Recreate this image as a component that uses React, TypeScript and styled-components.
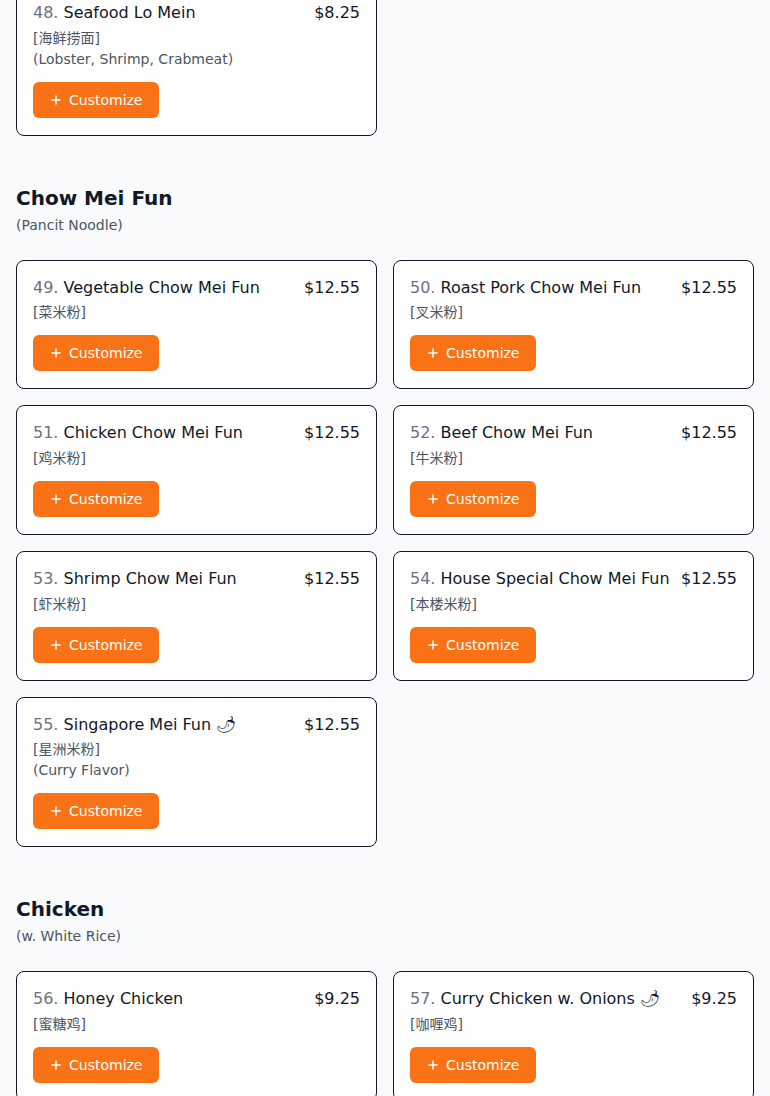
import React from 'react';
import styled, { createGlobalStyle } from 'styled-components';

const GlobalStyle = createGlobalStyle`
  * { box-sizing: border-box; }
  body {
    margin: 0;
    background: #f9fafb;
    font-family: "DejaVu Sans", "Noto Sans CJK SC", sans-serif;
    color: #111827;
  }
`;

interface Dish {
  no: number;
  name: string;
  zh: string;
  price: string;
  note?: string;
  spicy?: boolean;
}

interface Section {
  title: string;
  sub?: string;
  items: Dish[];
}

const tail: Dish[] = [
  { no: 48, name: 'Seafood Lo Mein', zh: '海鲜捞面', price: '$8.25', note: '(Lobster, Shrimp, Crabmeat)' },
];

const sections: Section[] = [
  {
    title: 'Chow Mei Fun',
    sub: '(Pancit Noodle)',
    items: [
      { no: 49, name: 'Vegetable Chow Mei Fun', zh: '菜米粉', price: '$12.55' },
      { no: 50, name: 'Roast Pork Chow Mei Fun', zh: '叉米粉', price: '$12.55' },
      { no: 51, name: 'Chicken Chow Mei Fun', zh: '鸡米粉', price: '$12.55' },
      { no: 52, name: 'Beef Chow Mei Fun', zh: '牛米粉', price: '$12.55' },
      { no: 53, name: 'Shrimp Chow Mei Fun', zh: '虾米粉', price: '$12.55' },
      { no: 54, name: 'House Special Chow Mei Fun', zh: '本楼米粉', price: '$12.55' },
      { no: 55, name: 'Singapore Mei Fun', zh: '星洲米粉', price: '$12.55', note: '(Curry Flavor)', spicy: true },
    ],
  },
  {
    title: 'Chicken',
    sub: '(w. White Rice)',
    items: [
      { no: 56, name: 'Honey Chicken', zh: '蜜糖鸡', price: '$9.25' },
      { no: 57, name: 'Curry Chicken w. Onions', zh: '咖喱鸡', price: '$9.25', spicy: true },
      { no: 58, name: 'Chicken w. Broccoli', zh: '芥兰鸡', price: '$9.25' },
      { no: 59, name: 'Sesame Chicken', zh: '芝麻鸡', price: '$9.25' },
    ],
  },
];

const Page = styled.main`
  margin-top: -15px;
  padding: 0 16px 32px;
  display: flex;
  flex-direction: column;
  gap: 48px;
`;

const SectionBlock = styled.section`
  display: flex;
  flex-direction: column;
`;

const Heading = styled.h2`
  margin: 0;
  font-size: 20px;
  line-height: 28px;
  font-weight: 700;
  color: #111827;
`;

const SubHeading = styled.p`
  margin: 3px 0 0;
  font-size: 14px;
  line-height: 21px;
  color: #4b5563;
`;

const Grid = styled.div<{ $spaced?: boolean }>`
  display: grid;
  grid-template-columns: 1fr 1fr;
  gap: 16px;
  margin-top: ${({ $spaced }) => ($spaced ? '24px' : '0')};
`;

const Card = styled.article`
  background: #fff;
  border: 1px solid #111827;
  border-radius: 8px;
  padding: 16px 16px 17px;
  display: flex;
  flex-direction: column;
  align-items: flex-start;
`;

const TitleRow = styled.div`
  width: 100%;
  display: flex;
  justify-content: space-between;
  align-items: flex-start;
  gap: 8px;
  font-size: 16px;
  line-height: 22px;
`;

const Name = styled.span`
  color: #111827;
`;

const Num = styled.span`
  color: #6b7280;
`;

const Price = styled.span`
  color: #111827;
  white-space: nowrap;
`;

const Small = styled.div<{ $first?: boolean }>`
  margin-top: ${({ $first }) => ($first ? '3.67px' : '0')};
  font-size: 14px;
  line-height: 21px;
  color: #4b5563;
`;

const CustomizeButton = styled.button`
  margin-top: 12px;
  height: 36px;
  padding: 0 16px;
  border: none;
  border-radius: 6px;
  background: #f97316;
  color: #fff;
  font-family: inherit;
  font-size: 14px;
  display: inline-flex;
  align-items: center;
  gap: 6px;
  cursor: pointer;
`;

const PlusIcon = () => (
  <svg width="14" height="14" viewBox="0 0 24 24" fill="none" stroke="currentColor" strokeWidth="2.5" strokeLinecap="round">
    <path d="M12 5v14M5 12h14" />
  </svg>
);

const DishCard = ({ dish }: { dish: Dish }) => (
  <Card>
    <TitleRow>
      <Name>
        <Num>{dish.no}.</Num> {dish.name}
        {dish.spicy && ' 🌶'}
      </Name>
      <Price>{dish.price}</Price>
    </TitleRow>
    <Small $first>[{dish.zh}]</Small>
    {dish.note && <Small>{dish.note}</Small>}
    <CustomizeButton>
      <PlusIcon />
      Customize
    </CustomizeButton>
  </Card>
);

export default function App() {
  return (
    <>
      <GlobalStyle />
      <Page>
        <Grid>
          {tail.map((d) => (
            <DishCard key={d.no} dish={d} />
          ))}
        </Grid>
        {sections.map((s) => (
          <SectionBlock key={s.title}>
            <Heading>{s.title}</Heading>
            {s.sub && <SubHeading>{s.sub}</SubHeading>}
            <Grid $spaced>
              {s.items.map((d) => (
                <DishCard key={d.no} dish={d} />
              ))}
            </Grid>
          </SectionBlock>
        ))}
      </Page>
    </>
  );
}
